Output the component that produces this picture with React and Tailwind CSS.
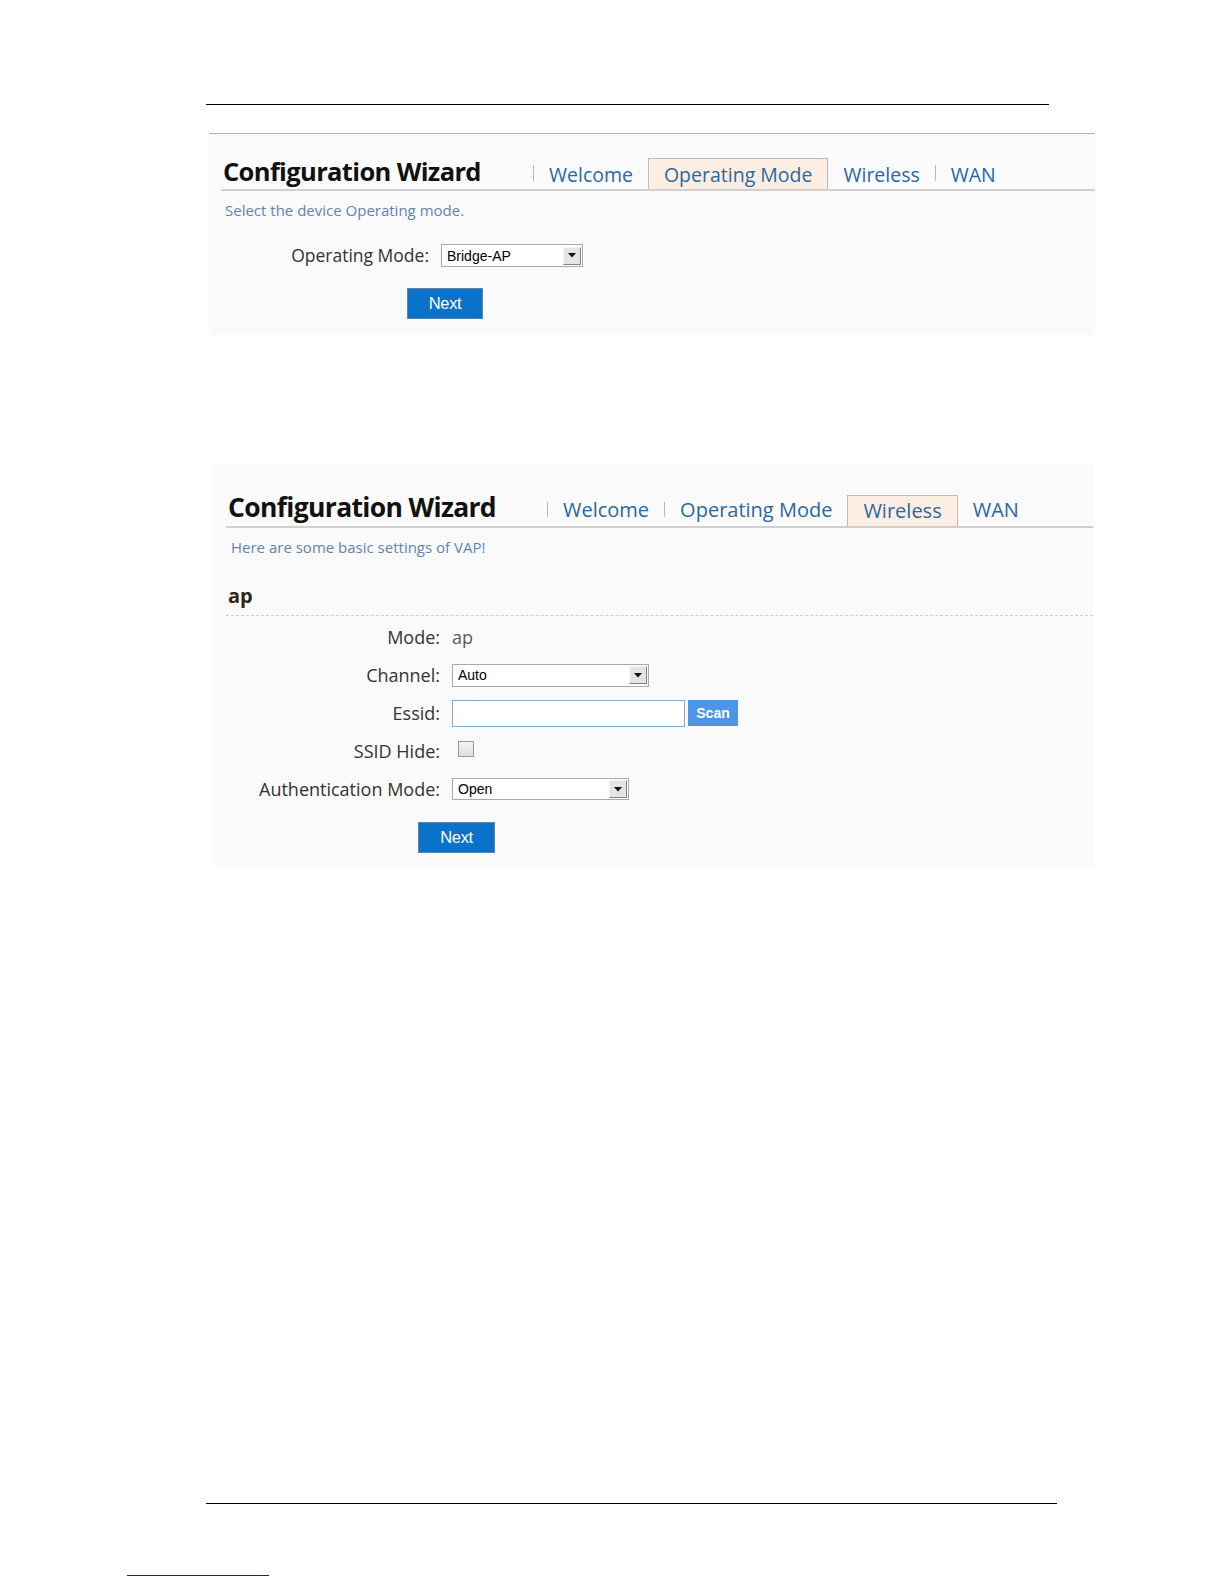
import React from 'react';

const Select = ({ value, width }) => {
  return (
    <div className={`flex items-center border border-[#a9a9a9] bg-white ${width}`}>
      <span className="flex-1 pl-[5px] font-['Liberation_Sans',Arial,sans-serif] text-[14px] leading-none text-black">{value}</span>
      <span className="mr-px flex h-[18px] w-[18px] items-center justify-center border border-t-[#f4f4f4] border-l-[#f4f4f4] border-r-[#808080] border-b-[#808080] bg-[#e4e4e4]">
        <svg width="8" height="5" viewBox="0 0 8 5">
          <path d="M0 0h8L4 4.5z" fill="#111" />
        </svg>
      </span>
    </div>
  );
};

const NextButton = ({ className }) => (
  <button
    type="button"
    className={`flex h-[31px] items-center justify-center border border-[#5a86ad] bg-[#0a72c8] font-['Liberation_Sans',Arial,sans-serif] text-[16.5px] tracking-tight text-white ${className}`}
  >
    Next
  </button>
);

const Sep = ({ className }) => <span className={`w-px bg-[#b8b8b8] ${className}`}></span>;

const Tab = ({ label, active, className }) =>
  active ? (
    <span className={`flex h-[31px] items-end border border-b-0 border-[#c6b8ac] bg-[#fdeee3] px-[15px] pb-[5px] leading-none text-[#2b689f] ${className}`}>
      {label}
    </span>
  ) : (
    <span className={`px-[15px] leading-none text-[#2b689f] ${className}`}>{label}</span>
  );

const Row = ({ label, children }) => (
  <div className="flex h-[38px] items-center">
    <span className="w-[228px] text-right text-[18px] text-[#333]">{label}</span>
    <div className="ml-[12px] flex items-center">{children}</div>
  </div>
);

export default function App() {
  return (
    <div className="min-h-[1584px] w-[1224px] bg-white pt-[104px] font-['Open_Sans','Noto_Sans',sans-serif]">
      <div className="ml-[206px] h-px w-[843px] bg-black"></div>

      {/* first wizard screen */}
      <div className="ml-[209px] mt-[28px] w-[886px] border-t border-[#b0b0b0] bg-[#fafafa] pb-[16px]">
        <div className="ml-[12px] flex h-[57px] items-end border-b-2 border-[#d0d0d0] text-[19.5px]">
          <div className="w-[312px] pl-[2px]">
            <h1 className="mb-[5px] text-[25.5px] font-bold leading-none tracking-tight text-[#111]">Configuration Wizard</h1>
          </div>
          <Sep className="mb-[8px] h-[16px]" />
          <Tab label="Welcome" className="mb-[5px]" />
          <Tab label="Operating Mode" active />
          <Tab label="Wireless" className="mb-[5px]" />
          <Sep className="mb-[8px] h-[16px]" />
          <Tab label="WAN" className="mb-[5px]" />
        </div>
        <p className="ml-[16px] mt-[9px] text-[15px] leading-[20px] text-[#6185ad]">Select the device Operating mode.</p>
        <div className="mt-[24px] flex h-[23px] items-center">
          <span className="w-[220px] text-right text-[17.5px] text-[#333]">Operating Mode:</span>
          <div className="ml-[12px]">
            <Select value="Bridge-AP" width="w-[142px] h-[23px]" />
          </div>
        </div>
        <NextButton className="ml-[198px] mt-[21px] w-[76px]" />
      </div>

      {/* second wizard screen */}
      <div className="ml-[212px] mt-[128px] w-[881px] bg-[#fafafa] pb-[13px]">
        <div className="ml-[14px] flex h-[65px] items-end border-b-2 border-[#d0d0d0] text-[20px]">
          <div className="w-[321px] pl-[2px]">
            <h1 className="mb-[6px] text-[26.5px] font-bold leading-none tracking-tight text-[#111]">Configuration Wizard</h1>
          </div>
          <Sep className="mb-[9px] h-[15px]" />
          <Tab label="Welcome" className="mb-[6px]" />
          <Sep className="mb-[9px] h-[15px]" />
          <Tab label="Operating Mode" className="mb-[6px]" />
          <Tab label="Wireless" active />
          <Tab label="WAN" className="mb-[6px]" />
        </div>
        <p className="ml-[19px] mt-[9px] text-[15px] leading-[20px] text-[#6185ad]">Here are some basic settings of VAP!</p>
        <h2 className="ml-[16px] mt-[27px] text-[20px] font-bold leading-[24px] text-[#2a2914]">ap</h2>
        <div className="ml-[14px] mt-[7px] border-t border-dashed border-[#cfcfcf]"></div>
        <div className="mt-[2px]">
          <Row label="Mode:">
            <span className="text-[18px] text-[#5a5a5a]">ap</span>
          </Row>
          <Row label="Channel:">
            <Select value="Auto" width="w-[197px] h-[23px]" />
          </Row>
          <Row label="Essid:">
            <div className="h-[27px] w-[233px] border border-[#80a9d4] bg-white"></div>
            <button type="button" className="ml-[3px] h-[26px] w-[50px] bg-[#4d95e8] font-['Liberation_Sans',Arial,sans-serif] text-[14px] font-bold text-white">
              Scan
            </button>
          </Row>
          <Row label="SSID Hide:">
            <span className="mb-[4px] ml-[6px] h-[16px] w-[16px] border border-[#9a9a9a] bg-gradient-to-b from-[#f4f4f4] to-[#dedede]"></span>
          </Row>
          <Row label="Authentication Mode:">
            <Select value="Open" width="w-[177px] h-[22px]" />
          </Row>
        </div>
        <NextButton className="ml-[206px] mt-[14px] w-[77px]" />
      </div>

      <div className="ml-[206px] mt-[637px] h-px w-[851px] bg-black"></div>
      <div className="ml-[127px] mt-[71px] h-px w-[142px] bg-[#1c1c8a]"></div>
    </div>
  );
}
